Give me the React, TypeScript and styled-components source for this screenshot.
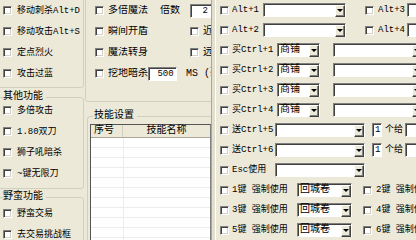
import styled, { createGlobalStyle } from "styled-components";

const GlobalStyle = createGlobalStyle`
  html, body { margin: 0; padding: 0; background: #ece9d8; }
`;

const FONT = `"Liberation Mono", "Noto Sans CJK SC", monospace`;

const Screen = styled.div`
  display: flex;
  width: 416px;
  height: 240px;
  overflow: hidden;
  background: #ece9d8;
  color: #000;
  font-family: ${FONT};
  line-height: 12px;
`;

const LeftCol = styled.div`
  display: flex;
  flex-direction: column;
  width: 84px;
  flex-shrink: 0;
  overflow: hidden;
  font-size: 9px;
`;

const MidCol = styled.div`
  display: flex;
  flex-direction: column;
  width: 127px;
  flex-shrink: 0;
  overflow: hidden;
  font-size: 10px;
`;

const Splitter = styled.div`
  width: 3px;
  flex-shrink: 0;
  background: #e2dfcf;
  border-left: 1px solid #aca899;
  border-right: 1px solid #fff;
`;

const RightPanel = styled.div`
  display: flex;
  flex-direction: column;
  flex: 1;
  min-width: 0;
  padding-left: 4px;
  font-size: 9px;
`;

const Group = styled.fieldset<{ $mt?: number; $ml?: number; $w: number; $pt?: number; $pb?: number; $pl?: number }>`
  box-sizing: border-box;
  width: ${(p) => p.$w}px;
  min-width: 0;
  flex-shrink: 0;
  margin: ${(p) => p.$mt ?? 0}px 0 0 ${(p) => p.$ml ?? 0}px;
  padding: ${(p) => p.$pt ?? 0}px 0 ${(p) => p.$pb ?? 0}px ${(p) => p.$pl ?? 0}px;
  border: 1px solid #d0d0bf;
  border-radius: 3px;
`;

const Legend = styled.legend<{ $ml?: number }>`
  margin-left: ${(p) => p.$ml ?? 0}px;
  padding: 0 3px 0 ${(p) => (p.$ml ? 1 : 0)}px;
  font-size: 10px;
  line-height: 12px;
`;

const Row = styled.div<{ $h?: number; $mt?: number }>`
  display: flex;
  align-items: center;
  height: ${(p) => p.$h ?? 21}px;
  margin-top: ${(p) => p.$mt ?? 0}px;
  flex-shrink: 0;
  white-space: pre;
`;

const Check = styled.span<{ $ml?: number }>`
  box-sizing: border-box;
  flex-shrink: 0;
  width: 9px;
  height: 9px;
  margin-left: ${(p) => p.$ml ?? 0}px;
  background: #fff;
  border: 1px solid;
  border-color: #808080 #fff #fff #808080;
  box-shadow: inset 1px 1px #404040, inset -1px -1px #d4d0c8;
`;

const Label = styled.span<{ $w?: number; $ml?: number }>`
  flex-shrink: 0;
  margin-left: ${(p) => p.$ml ?? 4}px;
  ${(p) => (p.$w ? `width: ${p.$w}px; overflow: hidden;` : "")}
`;

const Field = styled.span<{ $w: number; $ml?: number; $right?: boolean }>`
  box-sizing: border-box;
  display: flex;
  align-items: center;
  justify-content: ${(p) => (p.$right ? "flex-end" : "flex-start")};
  flex-shrink: 0;
  width: ${(p) => p.$w}px;
  height: 14px;
  margin-left: ${(p) => p.$ml ?? 0}px;
  padding: 0 3px;
  background: #fff;
  border: 1px solid;
  border-color: #808080 #fff #fff #808080;
  box-shadow: inset 1px 1px #404040;
  font-size: 9px;
`;

const Combo = styled(Field)`
  justify-content: space-between;
  padding: 0 0 0 2px;
  font-size: 10px;
`;

const Arrow = styled.span`
  box-sizing: border-box;
  display: flex;
  align-items: center;
  justify-content: center;
  flex-shrink: 0;
  width: 10px;
  height: 12px;
  margin-top: 1px;
  background: #ece9d8;
  border: 1px solid;
  border-color: #fff #404040 #404040 #fff;
  box-shadow: inset -1px -1px #808080;

  &::after {
    content: "";
    border-left: 3px solid transparent;
    border-right: 3px solid transparent;
    border-top: 3px solid #000;
  }
`;

const ListView = styled.div`
  box-sizing: border-box;
  display: flex;
  flex-direction: column;
  width: 121px;
  height: 130px;
  flex-shrink: 0;
  background: #fff;
  border: 1px solid;
  border-color: #555 #808080 #808080 #555;
`;

const ListHead = styled.div`
  display: flex;
  height: 12px;
  flex-shrink: 0;
  background: #ece9d8;
  border-bottom: 1px solid #aca899;
`;

const HeadCell = styled.span<{ $w?: number }>`
  box-sizing: border-box;
  ${(p) => (p.$w ? `width: ${p.$w}px; padding-left: 3px; border-right: 1px solid #d0d0bf;` : "flex: 1; text-align: center;")}
  line-height: 12px;
`;

const ListRow = styled.div`
  display: flex;
  box-sizing: border-box;
  height: 10px;
  flex-shrink: 0;
  border-bottom: 1px solid #ececec;
`;

const ListCell = styled.span`
  width: 32px;
  border-right: 1px solid #ececec;
`;

function Combobox({ w, ml, text }: { w: number; ml?: number; text?: string }) {
  return (
    <Combo $w={w} $ml={ml}>
      <span>{text ?? ""}</span>
      <Arrow />
    </Combo>
  );
}

function LeftItem({ label, mt }: { label: string; mt?: number }) {
  return (
    <Row $mt={mt}>
      <Check />
      <Label $ml={5}>{label}</Label>
    </Row>
  );
}

const buyRows = ["买Ctrl+1", "买Ctrl+2", "买Ctrl+3", "买Ctrl+4"];
const keyRows = [
  ["1键 强制使用", "2键 强制使用"],
  ["3键 强制使用", "4键 强制使用"],
  ["5键 强制使用", "6键 强制使用"],
];

export default function App() {
  return (
    <>
      <GlobalStyle />
      <Screen>
        <LeftCol>
          <Group $ml={-10} $mt={-6} $w={94} $pt={5} $pl={12} $pb={3}>
            <LeftItem label="移动刺杀Alt+D" />
            <LeftItem label="移动攻击Alt+S" />
            <LeftItem label="定点烈火" />
            <LeftItem label="攻击过蓝" />
          </Group>
          <Group $ml={-10} $mt={3} $w={94} $pl={12} $pb={4}>
            <Legend>其他功能</Legend>
            <LeftItem label="多倍攻击" mt={-3} />
            <LeftItem label="1.80双刀" />
            <LeftItem label="狮子吼暗杀" />
            <LeftItem label="~键无限刀" />
          </Group>
          <Group $ml={-10} $mt={2} $w={94} $pl={12}>
            <Legend>野蛮功能</Legend>
            <LeftItem label="野蛮交易" />
            <LeftItem label="去交易挑战框" />
          </Group>
        </LeftCol>

        <MidCol>
          <Group $ml={1} $mt={-6} $w={200} $pt={5} $pl={9} $pb={17}>
            <Row>
              <Check />
              <Label $w={52}>多倍魔法</Label>
              <Label $ml={0} $w={30}>倍数</Label>
              <Field $w={22} $right>2</Field>
            </Row>
            <Row>
              <Check />
              <Label $w={82}>瞬间开盾</Label>
              <Check />
              <Label>近身攻击</Label>
            </Row>
            <Row>
              <Check />
              <Label $w={82}>魔法转身</Label>
              <Check />
              <Label>远程攻击</Label>
            </Row>
            <Row>
              <Check />
              <Label $w={40}>挖地暗杀</Label>
              <Field $w={29}>&nbsp;500</Field>
              <Label $ml={9}>MS (毫秒)</Label>
            </Row>
          </Group>
          <Group $ml={3} $mt={8} $w={200} $pt={2} $pl={2}>
            <Legend $ml={3}>技能设置</Legend>
            <ListView>
              <ListHead>
                <HeadCell $w={32}>序号</HeadCell>
                <HeadCell>技能名称</HeadCell>
              </ListHead>
              {Array.from({ length: 12 }).map((_, i) => (
                <ListRow key={i}>
                  <ListCell />
                </ListRow>
              ))}
            </ListView>
          </Group>
        </MidCol>

        <Splitter />

        <RightPanel>
          {["1", "2"].map((n, i) => (
            <Row $h={20} key={n}>
              <Check />
              <Label $ml={3} $w={31}>Alt+{n}</Label>
              <Combobox w={83} />
              <Check $ml={19} />
              <Label $w={29}>Alt+{i + 3}</Label>
              <Field $w={40} />
            </Row>
          ))}
          {buyRows.map((t) => (
            <Row $h={20} key={t}>
              <Check />
              <Label $ml={3} $w={45}>{t}</Label>
              <Combobox w={43} text="商铺" />
              <Combobox w={90} ml={13} />
            </Row>
          ))}
          {["送Ctrl+5", "送Ctrl+6"].map((t) => (
            <Row $h={20} key={t}>
              <Check />
              <Label $ml={3} $w={43}>{t}</Label>
              <Combobox w={90} />
              <Field $w={10} $ml={7} style={{ padding: "0 2px" }}>1</Field>
              <Label $ml={3} $w={20}>个给</Label>
              <Field $w={40} />
            </Row>
          ))}
          <Row $h={20}>
            <Check />
            <Label $ml={3} $w={43}>Esc使用</Label>
            <Combobox w={90} />
          </Row>
          {keyRows.map(([a, b]) => (
            <Row $h={20} key={a}>
              <Check />
              <Label $ml={3} $w={65}>{a}</Label>
              <Combobox w={55} text="回城卷" />
              <Check $ml={11} />
              <Label>{b}</Label>
            </Row>
          ))}
        </RightPanel>
      </Screen>
    </>
  );
}
